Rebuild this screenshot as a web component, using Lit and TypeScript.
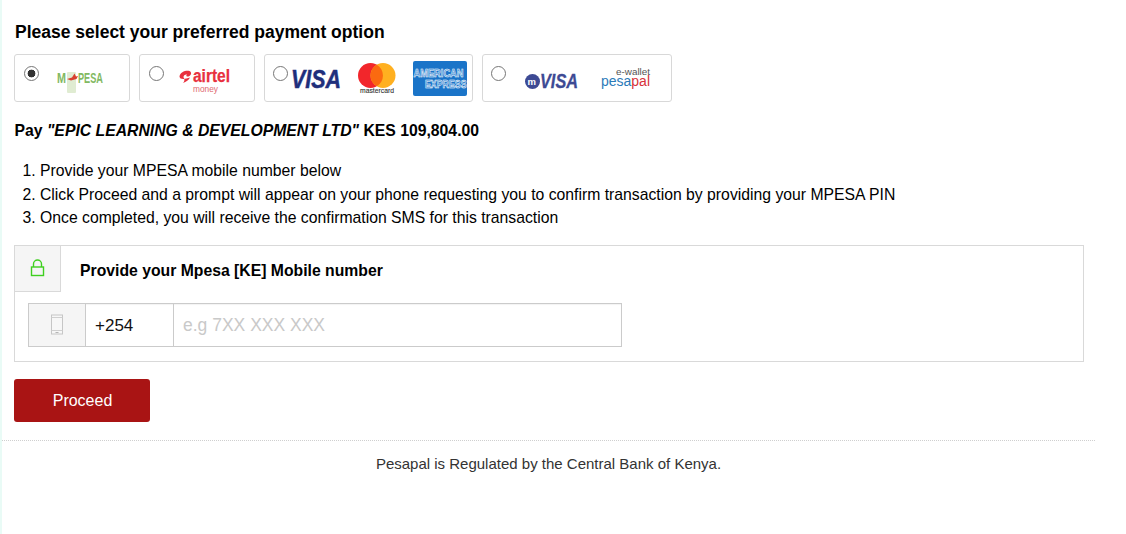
import { LitElement, html, css, svg } from "lit";
import { customElement, state } from "lit/decorators.js";

const phoneIcon = svg`<svg class="ic" width="14" height="22" viewBox="0 0 14 22" fill="none"><rect x="1.5" y="1" width="11" height="19" fill="#f7f7f7" stroke="#c6c6c6"/><path d="M1.5 3.5H12.5M1.5 16.5H12.5" stroke="#cfcfcf"/><path d="M5.5 18.5H8.5" stroke="#b5b5b5"/></svg>`;
const lockIcon = svg`<svg width="15" height="18" viewBox="0 0 15 18" fill="none"><rect x="1.5" y="8" width="12" height="8.5" stroke="#3fcf1f" stroke-width="1.4"/><path d="M3.5 8V5a4 4 0 0 1 8 0v3" stroke="#3fcf1f" stroke-width="1.4"/></svg>`;

const mpesa = svg`<svg width="52" height="38" viewBox="0 0 52 38">
  <rect x="11" y="12" width="9" height="21" rx="1" fill="#e0ecd2"/>
  <text x="1" y="23" class="mp" textLength="9" lengthAdjust="spacingAndGlyphs">M</text>
  <path d="M11 19 L16 17.5 L18.5 13.5 L20 16.5 L22 16 L20.5 19 L15 20.5 Z" fill="#d8402f"/>
  <text x="22" y="23" class="mp" textLength="25" lengthAdjust="spacingAndGlyphs">PESA</text>
</svg>`;

const airtel = svg`<svg width="56" height="38" viewBox="0 0 56 38">
  <path d="M0.5 16.5 C1 12 7 10 10.5 11 C13 12 12.5 15.5 9.5 16.5 C7.5 17 6.5 15.5 8 14.5 C5.5 14.5 4 16 4.8 18 C5.5 19.5 6 20.5 4 23 C7 22 10 20 11 17.5 L7.5 18.5 C4 19.5 0.5 19 0.5 16.5 Z" fill="#e8313e"/>
  <text x="14" y="22" class="air" textLength="37" lengthAdjust="spacingAndGlyphs">airtel</text>
  <text x="14" y="31.5" class="airm" textLength="25" lengthAdjust="spacingAndGlyphs">money</text>
</svg>`;

const visa = svg`<svg width="54" height="22" viewBox="0 0 54 22"><text x="1" y="19" class="visa" textLength="50" lengthAdjust="spacingAndGlyphs">VISA</text></svg>`;

const master = svg`<svg width="38" height="32" viewBox="0 0 38 32">
  <circle cx="12.5" cy="12.5" r="12.5" fill="#f2262b"/>
  <circle cx="25" cy="12.5" r="12.5" fill="#ffb020"/>
  <path d="M18.75 1.7a12.5 12.5 0 0 1 0 21.6a12.5 12.5 0 0 1 0-21.6Z" fill="#fb6a10"/>
  <text x="2" y="29.5" class="mc" textLength="34" lengthAdjust="spacingAndGlyphs">mastercard</text>
</svg>`;

const amex = svg`<svg width="54" height="35" viewBox="0 0 54 35">
  <rect width="54" height="35" rx="2" fill="#1a74c8"/>
  <text x="0.5" y="16" class="amex" textLength="50" lengthAdjust="spacingAndGlyphs">AMERICAN</text>
  <text x="12" y="27" class="amex" textLength="41.5" lengthAdjust="spacingAndGlyphs">EXPRESS</text>
</svg>`;

const mvisa = svg`<svg width="54" height="18" viewBox="0 0 54 18">
  <circle cx="7.5" cy="8.5" r="7.5" fill="#3d4a94"/>
  <text x="2.6" y="11.5" class="mm">m</text>
  <text x="15" y="15" class="visa2" textLength="38" lengthAdjust="spacingAndGlyphs">VISA</text>
</svg>`;

const pesapal = svg`<svg width="50" height="28" viewBox="0 0 50 28">
  <text x="15" y="7" class="ew" textLength="34" lengthAdjust="spacingAndGlyphs">e-wallet</text>
  <text x="0" y="17.5" class="pp" textLength="49" lengthAdjust="spacingAndGlyphs"><tspan fill="#2b7bb9">pesa</tspan><tspan fill="#d8313a">pal</tspan></text>
</svg>`;

@customElement("app-root")
export class AppRoot extends LitElement {
  @state() selected = 0;

  static styles = css`
    :host {
      display: block;
      font-family: "Liberation Sans", Arial, sans-serif;
      color: #000;
      background: #fff;
      height: 534px;
      overflow: hidden;
    }
    .page {
      height: 534px;
      box-sizing: border-box;
      border-left: 2px solid #e9fbf6;
      width: 1095px;
      display: flex;
      flex-direction: column;
    }
    .main { padding: 0 11px 0 12px; }
    h1 {
      margin: 22px 0 0;
      font-size: 17.5px;
      line-height: 20px;
      font-weight: 700;
      text-indent: 1px;
    }
    .options { display: flex; gap: 9px; margin-top: 12px; }
    .opt {
      box-sizing: border-box;
      height: 48px;
      border: 1px solid #d8d8d8;
      border-radius: 3px;
      display: flex;
      align-items: flex-start;
      cursor: pointer;
    }
    input[type="radio"] {
      appearance: none;
      flex: none;
      margin: 11px 0 0 0;
      width: 15px;
      height: 15px;
      border: 1.5px solid #767676;
      border-radius: 50%;
      box-sizing: border-box;
      background: #fff;
      cursor: pointer;
    }
    input[type="radio"]:checked {
      background: radial-gradient(circle, #333 0 3.6px, #fff 4.2px);
    }
    .o1 { width: 116px; padding-left: 9px; }
    .o2 { width: 116px; padding-left: 9px; }
    .o3 { width: 209px; padding-left: 8px; }
    .o4 { width: 190px; padding-left: 8px; }
    .o1 svg { margin: 5px 0 0 17px; }
    .o2 svg { margin: 5px 0 0 15px; }
    .o3 .v { margin: 14px 0 0 2px; }
    .o3 .m { margin: 8px 0 0 14px; }
    .o3 .a { margin: 6px 0 0 17px; }
    .o4 .v { margin: 18px 0 0 19px; }
    .o4 .p { margin: 13px 0 0 22px; }
    .v, .m, .a, .p { display: block; flex: none; line-height: 0; }
    svg { overflow: visible; }
    .mp { font: 700 14.5px "Liberation Sans Narrow", "Liberation Sans", sans-serif; fill: #82b962; }
    .air { font: 700 18px "Liberation Sans Narrow", "Liberation Sans", sans-serif; fill: #e8313e; stroke: #e8313e; stroke-width: 0.25px; }
    .airm { font: 400 9.5px "Liberation Sans", sans-serif; fill: #e06a70; }
    .visa { font: italic 700 25px "Liberation Sans", sans-serif; fill: #1f2f7c; stroke: #1f2f7c; stroke-width: 0.5px; }
    .visa2 { font: italic 700 19.5px "Liberation Sans", sans-serif; fill: #3d4a94; stroke: #3d4a94; stroke-width: 0.3px; }
    .mm { font: 700 9.5px "Liberation Sans", sans-serif; fill: #fff; }
    .mc { font: 400 6.5px "Liberation Sans", sans-serif; fill: #333; stroke: #333; stroke-width: 0.1px; }
    .amex { font: 700 11.5px "Liberation Sans", sans-serif; fill: #3d8ad4; stroke: #fff; stroke-width: 0.55px; }
    .ew { font: 400 9.5px "Liberation Sans", sans-serif; fill: #555; }
    .pp { font: 400 15.5px "Liberation Sans", sans-serif; }
    .pay {
      margin: 19px 0 0;
      font-size: 15.75px;
      line-height: 20px;
      font-weight: 700;
      text-indent: 0.5px;
    }
    ol {
      margin: 18px 0 0;
      padding: 0 0 0 26px;
      font-size: 15.75px;
      line-height: 23.5px;
    }
    .panel {
      box-sizing: border-box;
      height: 117px;
      margin-top: 15px;
      border: 1px solid #d9d9d9;
      width: 1070px;
    }
    .head { display: flex; align-items: center; height: 48px; }
    .lock {
      box-sizing: border-box;
      width: 46px;
      height: 46px;
      margin-top: -2px;
      background: #f5f5f5;
      border-right: 1px solid #d9d9d9;
      border-bottom: 1px solid #d9d9d9;
      display: flex;
      align-items: center;
      justify-content: center;
    }
    .head b { margin-left: 19px; padding-top: 2px; font-size: 15.75px; }
    .group {
      box-sizing: border-box;
      display: flex;
      width: 594px;
      height: 44px;
      margin: 9px 0 0 13px;
      border: 1px solid #cbcbcb;
      box-shadow: inset 0 1px 1px rgba(0,0,0,.05);
    }
    .g-ic {
      box-sizing: border-box;
      width: 57px;
      background: #f5f5f5;
      border-right: 1px solid #cbcbcb;
      display: flex;
      align-items: center;
      justify-content: center;
    }
    .code {
      box-sizing: border-box;
      width: 88px;
      border-right: 1px solid #cbcbcb;
      padding: 2px 0 0 9px;
      display: flex;
      align-items: center;
      font-size: 17px;
      color: #111;
    }
    .group input {
      flex: 1;
      min-width: 0;
      border: 0;
      outline: 0;
      padding: 2px 9px 0;
      background: transparent;
      font: 400 17.5px "Liberation Sans", Arial, sans-serif;
      color: #222;
    }
    .group input::placeholder { color: #c9c9c9; opacity: 1; }
    .btn {
      display: block;
      width: 136px;
      height: 43px;
      margin-top: 17px;
      border: 0;
      padding: 2px 0 0 1px;
      border-radius: 3px;
      background: #a91414;
      color: #fff;
      font: 400 16px "Liberation Sans", Arial, sans-serif;
      cursor: pointer;
    }
    footer {
      margin-top: 18px;
      border-top: 1px dotted #cfcfcf;
      padding-top: 14px;
      text-align: center;
      font-size: 15px;
      line-height: 18px;
      color: #333;
    }
  `;

  private pick(i: number) { this.selected = i; }

  render() {
    const radio = (i: number) => html`<input type="radio" name="pay" .checked=${this.selected === i} @change=${() => this.pick(i)} />`;
    return html`
      <div class="page">
        <div class="main">
          <h1>Please select your preferred payment option</h1>
          <div class="options">
            <label class="opt o1">${radio(0)}${mpesa}</label>
            <label class="opt o2">${radio(1)}${airtel}</label>
            <label class="opt o3">${radio(2)}<span class="v">${visa}</span><span class="m">${master}</span><span class="a">${amex}</span></label>
            <label class="opt o4">${radio(3)}<span class="v">${mvisa}</span><span class="p">${pesapal}</span></label>
          </div>
          <p class="pay">Pay <i>"EPIC LEARNING &amp; DEVELOPMENT LTD"</i> KES 109,804.00</p>
          <ol>
            <li>Provide your MPESA mobile number below</li>
            <li>Click Proceed and a prompt will appear on your phone requesting you to confirm transaction by providing your MPESA PIN</li>
            <li>Once completed, you will receive the confirmation SMS for this transaction</li>
          </ol>
          <section class="panel">
            <div class="head"><span class="lock">${lockIcon}</span><b>Provide your Mpesa [KE] Mobile number</b></div>
            <div class="group">
              <span class="g-ic">${phoneIcon}</span>
              <span class="code">+254</span>
              <input type="text" placeholder="e.g 7XX XXX XXX" />
            </div>
          </section>
          <button class="btn">Proceed</button>
        </div>
        <footer>Pesapal is Regulated by the Central Bank of Kenya.</footer>
      </div>
    `;
  }
}
